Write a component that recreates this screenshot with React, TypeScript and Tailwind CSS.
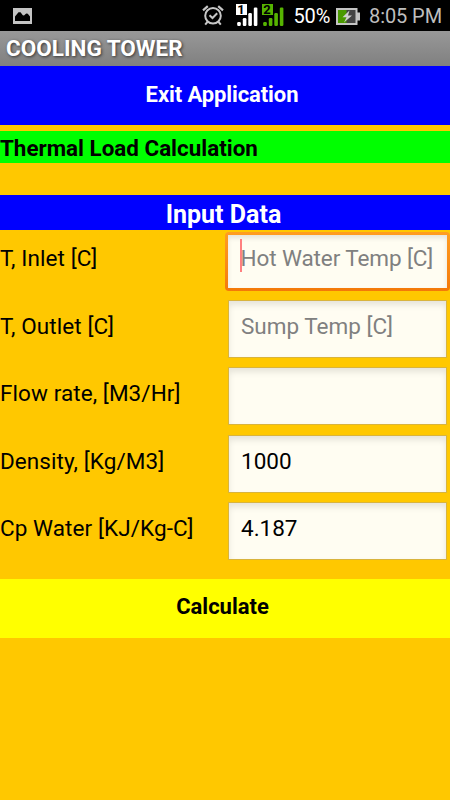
import { useState } from 'react'

const fields = [
  { id: 'inlet', label: 'T, Inlet [C]', hint: 'Hot Water Temp [C]', value: '' },
  { id: 'outlet', label: 'T, Outlet [C]', hint: 'Sump Temp [C]', value: '' },
  { id: 'flow', label: 'Flow rate, [M3/Hr]', hint: '', value: '' },
  { id: 'density', label: 'Density, [Kg/M3]', hint: '', value: '1000' },
  { id: 'cp', label: 'Cp Water [KJ/Kg-C]', hint: '', value: '4.187' },
]

function PictureIcon() {
  return (
    <svg className="w-[19px] h-4" viewBox="0 0 19 16">
      <path
        fill="#c4c4c4"
        fillRule="evenodd"
        d="M0 0h19v16H0zM2 13h15V8.5L14.8 5.8 13.2 5.5 11 7.5 9.8 7.2 7.5 4.3 5.5 4.3 2 8.5z"
      />
    </svg>
  )
}

function AlarmIcon() {
  return (
    <svg className="w-[22px] h-[21px]" viewBox="0 0 22 21" fill="none" stroke="#c6c6c6">
      <circle cx="11" cy="10.8" r="7.8" strokeWidth="2" />
      <path strokeWidth="2.2" d="M1 5.4 5.8 1.2M21 5.4 16.2 1.2" />
      <path strokeWidth="2" d="M5.8 16.5 3.2 19.6M16.2 16.5l2.6 3.1M7.5 10.2l3 2.8 4.7-4.7" />
    </svg>
  )
}

function SignalIcon({ sim, color }: { sim: string; color: string }) {
  return (
    <div className="relative w-[22px] h-[22px]">
      <svg className="w-[22px] h-[22px]" viewBox="0 0 22 22" fill={color}>
        <path d="M0 0h11v11H0z" />
        <rect x="1.2" y="18" width="3.6" height="4" rx="1.2" />
        <rect x="6.8" y="14" width="3.6" height="8" rx="1.2" />
        <rect x="12.3" y="9" width="3.6" height="13" rx="1.2" />
        <rect x="17.8" y="3.5" width="3.6" height="18.5" rx="1.2" />
      </svg>
      <span className="absolute left-0 top-0 w-[11px] text-center text-[13px] leading-[12px] font-bold text-black">
        {sim}
      </span>
    </div>
  )
}

function BatteryIcon() {
  return (
    <svg className="w-6 h-[17px]" viewBox="0 0 24 17">
      <path fill="#c4c4c4" d="M0 0h21.5v4.5H24v8h-2.5V17H0z" />
      <path fill="#444" d="M2 2h17.5v13H2z" />
      <path fill="#4a9a00" d="M2 2h8.5v13H2z" />
      <path fill="#d0d0d0" d="M13.5 2.5 6.5 9.2h4L8 14.5l8-6.9h-4z" />
    </svg>
  )
}

function StatusBar() {
  return (
    <div className="flex h-[31px] items-center bg-black pl-[13px] pr-2">
      <PictureIcon />
      <div className="ml-auto flex items-center">
        <AlarmIcon />
        <div className="ml-3 mb-px flex gap-1">
          <SignalIcon sim="1" color="#ffffff" />
          <SignalIcon sim="2" color="#56b400" />
        </div>
        <span className="ml-[10px] text-[20px] leading-none tracking-[-0.2px] text-white">50%</span>
        <div className="ml-[6px] mt-px">
          <BatteryIcon />
        </div>
        <span className="ml-[9px] text-[20px] leading-none tracking-[-0.1px] text-[#bebebe]">8:05 PM</span>
      </div>
    </div>
  )
}

export default function App() {
  const [values, setValues] = useState<Record<string, string>>(
    Object.fromEntries(fields.map((f) => [f.id, f.value]))
  )

  return (
    <div className="flex h-[800px] w-[450px] flex-col overflow-hidden bg-[#ffc800] font-['Roboto',sans-serif] text-black">
      <StatusBar />
      <header className="h-[35px] bg-linear-to-b from-[#989898] to-[#808080] pl-[6px] text-[22.5px] leading-[35px] font-bold text-white [text-shadow:1px_1px_3px_#333]">
        COOLING TOWER
      </header>

      <button className="h-[59px] shrink-0 bg-[#0000ff] pr-[6px] pb-[3px] text-[22px] tracking-[-0.1px] font-bold text-white">
        Exit Application
      </button>
      <h2 className="mt-[6px] h-8 shrink-0 bg-[#00ff00] text-[22.4px] leading-[35px] font-bold">
        Thermal Load Calculation
      </h2>
      <h1 className="mt-8 h-[35px] shrink-0 bg-[#0000ff] pr-[3px] text-center text-[25px] leading-[39px] font-bold text-white">
        Input Data
      </h1>

      <form className="flex flex-col pt-[2px]">
        {fields.map((field, i) => (
          <div key={field.id} className="flex h-[67.5px] justify-between pr-[3px]">
            <label
              htmlFor={field.id}
              className="pt-[11px] text-[22.5px] leading-[30px] tracking-[0.08px] whitespace-nowrap"
            >
              {field.label}
            </label>
            <div className="relative h-[62px] w-[219px]">
              {i === 0 && (
                <span className="absolute top-0 -left-[3px] h-[59px] w-[225px] rounded bg-linear-to-b from-[#ff9d20] to-[#f47908]" />
              )}
              <input
                id={field.id}
                value={values[field.id]}
                placeholder={field.hint}
                onChange={(e) => setValues({ ...values, [field.id]: e.target.value })}
                className={
                  i === 0
                    ? 'relative block mt-[3px] h-[53px] w-full bg-[#fffdf2] pl-[12.5px] pb-[7px] text-[22.5px] tracking-[-0.1px] outline-none placeholder:text-[#808080] shadow-[inset_0_3px_5px_#0000001a]'
                    : 'block h-[58px] w-full border border-[#d9b43c] bg-[#fffdf2] pl-[12px] pb-[6px] text-[22.5px] outline-none placeholder:text-[#808080] shadow-[inset_0_4px_6px_#0000001a]'
                }
              />
              {i === 0 && <span className="absolute left-3 top-[7px] h-[33px] w-[1.5px] bg-[#ff8080]" />}
            </div>
          </div>
        ))}
      </form>

      <button className="mt-[9px] h-[59px] shrink-0 bg-[#ffff00] pr-[5px] pb-[3px] text-[22px] font-bold">
        Calculate
      </button>
    </div>
  )
}
